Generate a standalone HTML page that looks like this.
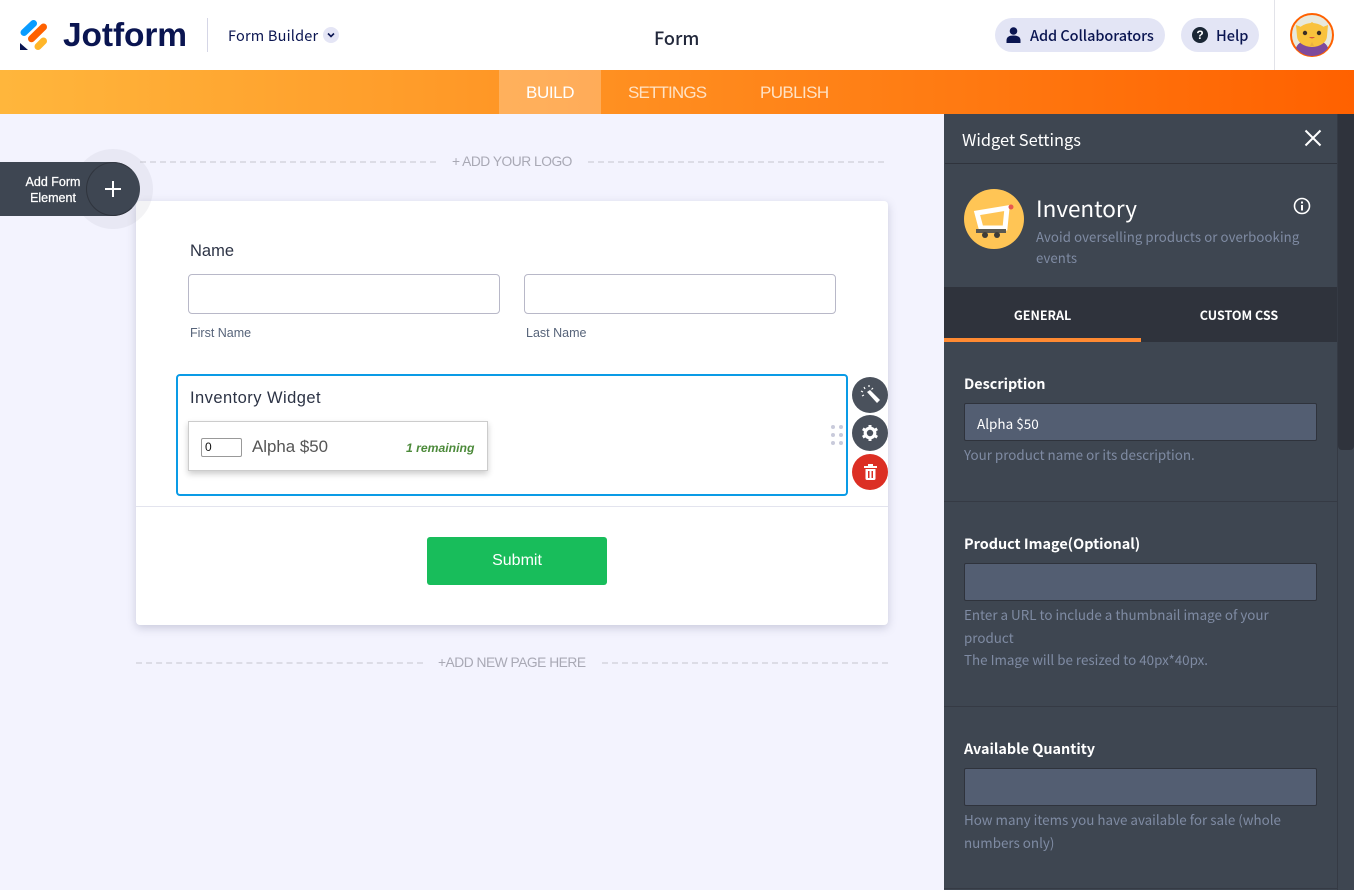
<!DOCTYPE html>
<html><head><meta charset="utf-8"><style>
*{box-sizing:border-box}
html,body{margin:0;padding:0;width:1354px;height:890px;overflow:hidden;background:#f3f3fe;font-family:"Liberation Sans",sans-serif}
.a{position:absolute;white-space:nowrap}
.n{font-family:"Noto Sans CJK JP","Liberation Sans",sans-serif}
.dash{position:absolute;height:0;border-top:2px dashed #dcdce6}
.inp{position:absolute;background:#fff;border:1px solid #b8b8c8;border-radius:4px;height:40px;width:312px;top:274px}
.pin{position:absolute;left:964px;width:353px;height:38px;background:#535e72;border:1px solid #2f333c;border-radius:2px}
.lb{left:964px;font-size:14.400px;font-weight:700;color:#fff;line-height:20px}
.hp{left:964px;font-size:13.400px;color:#7f8ba3;line-height:22.500px}
.sep{position:absolute;left:944px;width:393px;height:1px;background:#4a515e;border-top:1px solid #353a44}
.rb{position:absolute;left:852px;width:36px;height:36px;border-radius:50%;background:#4a515c}
</style></head><body>
<div class="a" style="left:0;top:0;width:1354px;height:70px;background:#fff"></div>
<svg class="a" style="left:0;top:0" width="60" height="60" fill="none" stroke-linecap="round" stroke-width="7">
<path d="M24 32.500L33.500 23.500" stroke="#0a9cff"/>
<path d="M31.500 38.800L43.500 27" stroke="#ff6100"/>
<path d="M38 46.500L43.500 41" stroke="#ffb629"/>
<path d="M20 43v7h8z" fill="#0a1551" stroke="none"/></svg>
<div class="a" style="left:63px;top:15px;font-size:33.500px;font-weight:700;color:#0a1551;letter-spacing:-.1px;line-height:42px">Jotform</div>
<div class="a" style="left:207px;top:18px;width:1px;height:34px;background:#d5d6e6"></div>
<div class="a n" style="left:228px;top:26px;font-size:14.500px;color:#0a1551;line-height:20px;letter-spacing:.2px">Form Builder</div>
<svg class="a" style="left:323px;top:27px" width="16" height="16"><circle cx="8" cy="8" r="8" fill="#e4e5f5"/><path d="M5 6.500l3 3 3-3" stroke="#0a1551" stroke-width="1.600" fill="none"/></svg>
<div class="a n" style="left:654px;top:26px;font-size:18px;font-weight:500;color:#22283b;line-height:24px">Form</div>
<div class="a" style="left:995px;top:18px;width:170px;height:34px;border-radius:17px;background:#e3e5f5"></div>
<svg class="a" style="left:1006px;top:27px" width="15" height="16" viewBox="0 0 15 16"><circle cx="7.500" cy="4" r="3.800" fill="#0a1551"/><path d="M0.500 16v-2.500C.5 10 3 8.500 7.500 8.500s7 1.500 7 5V16z" fill="#0a1551"/></svg>
<div class="a n" style="left:1030px;top:26px;font-size:14.500px;font-weight:500;color:#0a1551;line-height:20px;letter-spacing:-.05px">Add Collaborators</div>
<div class="a" style="left:1181px;top:18px;width:78px;height:34px;border-radius:17px;background:#e3e5f5"></div>
<div class="a" style="left:1192px;top:27px;width:16px;height:16px;border-radius:50%;background:#1b2735;color:#fff;font-size:12px;font-weight:700;text-align:center;line-height:16px">?</div>
<div class="a n" style="left:1216px;top:26px;font-size:14.500px;font-weight:500;color:#0a1551;line-height:20px">Help</div>
<div class="a" style="left:1274px;top:0;width:1px;height:70px;background:#e2e3e9"></div>
<svg class="a" style="left:1290px;top:13px" width="44" height="44" viewBox="0 0 44 44">
<circle cx="22" cy="22" r="21" fill="#e8e9dc" stroke="#ff6100" stroke-width="2"/>
<path d="M6 35c2-6 8-8 16-8s14 2 16 8a20 20 0 0 1-32 0z" fill="#7e4a9c"/>
<path d="M6 12l8 3 8-6 8 6 8-3-1 11a15 11 0 0 1-30 0z" fill="#f9c23c"/>
<ellipse cx="22" cy="21" rx="15" ry="11" fill="#f9c23c"/>
<circle cx="15" cy="20" r="2.200" fill="#3a2d25"/><circle cx="29" cy="20" r="2.200" fill="#3a2d25"/>
<path d="M19 24q3 3 6 0" fill="#d8503c"/><path d="M22 29l-2 4h4z" fill="#e8b040"/></svg>

<div class="a" style="left:0;top:70px;width:1354px;height:44px;background:linear-gradient(90deg,#ffb63c 0%,#ff6100 100%)"></div>
<div class="a" style="left:499px;top:70px;width:102px;height:44px;background:rgba(255,255,255,.25)"></div>
<div class="a" style="left:526px;top:82px;font-size:17px;color:#fff;line-height:22px;letter-spacing:-.4px">BUILD</div>
<div class="a" style="left:628px;top:82px;font-size:17px;color:#ffe2c4;line-height:22px;letter-spacing:-.85px">SETTINGS</div>
<div class="a" style="left:760px;top:82px;font-size:17px;color:#ffe2c4;line-height:22px;letter-spacing:-.6px">PUBLISH</div>

<div class="dash" style="left:140px;top:161px;width:296px"></div>
<div class="dash" style="left:588px;top:161px;width:296px"></div>
<div class="a" style="left:452px;top:154px;font-size:13.800px;color:#a9a9b5;line-height:16px;letter-spacing:-.5px">+ ADD YOUR LOGO</div>

<div class="a" style="left:136px;top:201px;width:752px;height:424px;background:#fff;border-radius:4px;box-shadow:0 3px 9px rgba(80,85,120,.25)"></div>
<div class="a" style="left:73px;top:149px;width:80px;height:80px;border-radius:50%;background:rgba(170,172,185,.14)"></div>
<div class="a" style="left:0;top:162px;width:140px;height:54px;background:#3e4652;border-radius:0 27px 27px 0"></div>
<div class="a" style="left:86px;top:162px;width:54px;height:54px;border-radius:50%;border:1px solid #2f343d;border-right-color:transparent;border-top-color:#343943"></div>
<div class="a" style="left:10px;top:174px;width:86px;text-align:center;font-size:12.500px;font-weight:400;color:#fff;line-height:16px;white-space:normal;-webkit-text-stroke:.25px #fff">Add Form<br>Element</div>
<svg class="a" style="left:104px;top:180px" width="18" height="18"><path d="M9 1v16M1 9h16" stroke="#fff" stroke-width="2"/></svg>

<div class="a" style="left:190px;top:241px;font-size:16.500px;color:#2c3345;line-height:20px">Name</div>
<div class="inp" style="left:188px"></div>
<div class="inp" style="left:524px"></div>
<div class="a" style="left:190px;top:325px;font-size:12.500px;color:#57647a;line-height:16px">First Name</div>
<div class="a" style="left:526px;top:325px;font-size:12.500px;color:#57647a;line-height:16px">Last Name</div>

<div class="a" style="left:176px;top:374px;width:672px;height:122px;border:2px solid #0a9be6;border-radius:4px"></div>
<div class="a" style="left:190px;top:388px;font-size:16.500px;color:#2c3345;line-height:20px;letter-spacing:.45px">Inventory Widget</div>
<div class="a" style="left:188px;top:421px;width:300px;height:50px;background:#fff;border:1px solid #ccc;box-shadow:0 3px 6px rgba(0,0,0,.2)"></div>
<div class="a" style="left:201px;top:438px;width:41px;height:19px;border:1px solid #999;border-radius:2px;font-size:12px;line-height:17px;padding-left:3px;color:#111">0</div>
<div class="a" style="left:252px;top:437px;font-size:16.900px;color:#555;line-height:20px">Alpha $50</div>
<div class="a" style="left:406px;top:440px;font-size:12.200px;font-weight:700;font-style:italic;color:#4c8a3a;line-height:16px">1 remaining</div>
<svg class="a" style="left:830px;top:424px" width="14" height="22" fill="#c9cbdb"><circle cx="3" cy="3" r="2"/><circle cx="11" cy="3" r="2"/><circle cx="3" cy="11" r="2"/><circle cx="11" cy="11" r="2"/><circle cx="3" cy="19" r="2"/><circle cx="11" cy="19" r="2"/></svg>

<div class="rb" style="top:377px"></div>
<svg class="a" style="left:852px;top:377px" width="36" height="36" fill="#fff"><path d="M15 15l3-2 10 10-3 3z"/><path d="M12 10l1 2M17 8v2M9 14l2 1M10 19l2-1M21 11l-1.500 1.500" stroke="#fff" stroke-width="1.200" fill="none"/></svg>
<div class="rb" style="top:415px"></div>
<svg class="a" style="left:861px;top:424px" width="18" height="18" viewBox="0 0 18 18"><circle cx="9" cy="9" r="4.800" fill="none" stroke="#fff" stroke-width="3.200"/><path d="M9 1v3.500M9 13.500V17M1.800 4.800l3 1.800M13.200 11.400l3 1.800M1.800 13.200l3-1.800M13.200 6.600l3-1.800" stroke="#fff" stroke-width="3"/></svg>
<div class="rb" style="top:454px;background:#dc2f24"></div>
<svg class="a" style="left:864px;top:464px" width="13" height="16" viewBox="0 0 13 16" fill="#fff"><rect x="0" y="2" width="13" height="2"/><rect x="4" y="0" width="5" height="2"/><path d="M1.500 5h10v9.500a1.500 1.500 0 0 1-1.500 1.500H3a1.500 1.500 0 0 1-1.500-1.500z"/><rect x="4" y="7" width="1.500" height="7" fill="#dc2f24"/><rect x="7.500" y="7" width="1.500" height="7" fill="#dc2f24"/></svg>

<div class="a" style="left:136px;top:506px;width:752px;height:1px;background:#e3e4ee"></div>
<div class="a" style="left:427px;top:537px;width:180px;height:48px;background:#18bd5b;border-radius:3px;color:#fff;font-size:16px;text-align:center;line-height:47px">Submit</div>

<div class="dash" style="left:136px;top:662px;width:287px"></div>
<div class="dash" style="left:602px;top:662px;width:286px"></div>
<div class="a" style="left:438px;top:655px;font-size:13.800px;color:#a9a9b5;line-height:16px;letter-spacing:-.5px">+ADD NEW PAGE HERE</div>

<!-- right panel -->
<div class="a" style="left:944px;top:114px;width:410px;height:776px;background:#3e4651"></div>
<div class="a" style="left:1337px;top:114px;width:17px;height:776px;background:#3e4651;border-left:1px solid #353a44"></div>
<div class="a" style="left:1338px;top:114px;width:16px;height:336px;background:#2f333c;border-radius:0 0 4px 4px"></div>
<div class="a n" style="left:962px;top:126px;font-size:16.400px;color:#fff;line-height:26px">Widget Settings</div>
<svg class="a" style="left:1304px;top:129px" width="18" height="18"><path d="M1.500 1.500l15 15M16.500 1.500l-15 15" stroke="#fff" stroke-width="2"/></svg>
<div class="a" style="left:945px;top:163px;width:392px;height:1px;background:#2f333c"></div>
<svg class="a" style="left:964px;top:189px" width="60" height="60" viewBox="0 0 60 60">
<circle cx="30" cy="30" r="30" fill="#ffc555"/>
<path d="M13 24l30-5-2 20H17z" fill="none" stroke="#fff" stroke-width="5"/>
<circle cx="47" cy="18" r="2.500" fill="#e8594e"/>
<rect x="12" y="40" width="30" height="4" fill="#5a5850"/>
<circle cx="21" cy="46" r="3" fill="#3f3d38"/><circle cx="33" cy="46" r="3" fill="#3f3d38"/></svg>
<div class="a n" style="left:1036px;top:191px;font-size:22.500px;color:#fff;line-height:34px">Inventory</div>
<svg class="a" style="left:1293px;top:197px" width="18" height="18"><circle cx="9" cy="9" r="7.500" fill="none" stroke="#fff" stroke-width="1.600"/><rect x="8" y="8" width="2" height="5.500" fill="#fff"/><rect x="8" y="4.500" width="2" height="2" fill="#fff"/></svg>
<div class="a n" style="left:1036px;top:226px;font-size:13.200px;color:#7f8ba3;line-height:21px;letter-spacing:.1px">Avoid overselling products or overbooking<br>events</div>

<div class="a" style="left:944px;top:287px;width:393px;height:55px;background:#2f333c"></div>
<div class="a" style="left:944px;top:338px;width:197px;height:4px;background:#ff8a32"></div>
<div class="a n" style="left:944px;top:305px;width:197px;text-align:center;font-size:12.500px;font-weight:700;color:#fff;line-height:20px">GENERAL</div>
<div class="a n" style="left:1141px;top:305px;width:196px;text-align:center;font-size:12.500px;font-weight:700;color:#fff;line-height:20px">CUSTOM CSS</div>

<div class="a n lb" style="top:374px">Description</div>
<div class="pin" style="top:403px"></div>
<div class="a n" style="left:977px;top:413px;font-size:13.500px;color:#fff;line-height:20px">Alpha $50</div>
<div class="a n hp" style="top:443px">Your product name or its description.</div>
<div class="sep" style="top:501px"></div>

<div class="a n lb" style="top:534px">Product Image(Optional)</div>
<div class="pin" style="top:563px"></div>
<div class="a n hp" style="top:603px">Enter a URL to include a thumbnail image of your<br>product<br>The Image will be resized to 40px*40px.</div>
<div class="sep" style="top:706px"></div>

<div class="a n lb" style="top:739px">Available Quantity</div>
<div class="pin" style="top:768px"></div>
<div class="a n hp" style="top:808px">How many items you have available for sale (whole<br>numbers only)</div>
<div class="sep" style="top:888px"></div>
</body></html>
